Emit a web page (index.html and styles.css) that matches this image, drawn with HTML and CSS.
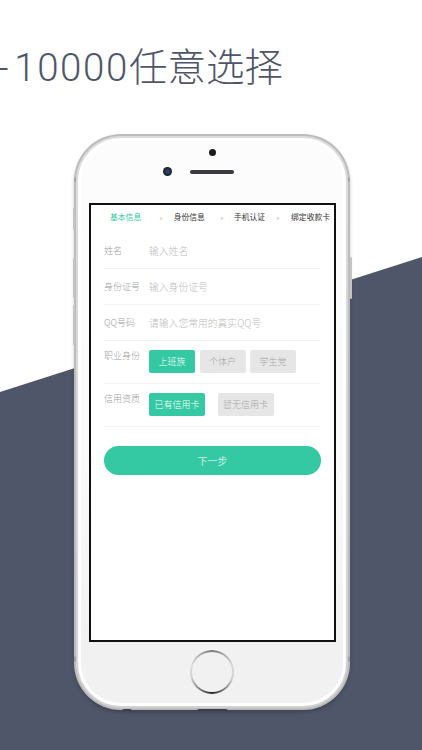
FILE: index.html
```html
<!DOCTYPE html>
<html lang="zh-CN">
<head>
<meta charset="utf-8">
<title>任意选择</title>
<link rel="stylesheet" href="styles.css">
</head>
<body>
<div class="page">
  <div class="slant"></div>
  <h1 class="headline"><span class="dash">-</span><span class="digits">10000</span>任意选择</h1>
  <div class="phone">
    <span class="side-btn side-mute"></span>
    <span class="side-btn side-up"></span>
    <span class="side-btn side-down"></span>
    <span class="side-btn side-power"></span>
    <div class="rim">
      <div class="bezel">
        <div class="top-bar">
          <span class="dot-sensor"></span>
          <div class="cam-row">
            <span class="camera"></span>
            <span class="speaker"></span>
          </div>
        </div>
        <div class="screen">
          <div class="steps">
            <span class="step step-on">基本信息</span>
            <span class="arrow arrow-a">»</span>
            <span class="step">身份信息</span>
            <span class="arrow arrow-b">»</span>
            <span class="step">手机认证</span>
            <span class="arrow arrow-c">»</span>
            <span class="step">绑定收款卡</span>
          </div>
          <div class="form">
            <div class="row">
              <span class="label">姓名</span><span class="hint">输入姓名</span>
            </div>
            <div class="row">
              <span class="label">身份证号</span><span class="hint">输入身份证号</span>
            </div>
            <div class="row">
              <span class="label">QQ号码</span><span class="hint">请输入您常用的真实QQ号</span>
            </div>
            <div class="row row-choice">
              <span class="label">职业身份</span>
              <div class="chips">
                <span class="chip chip-on">上班族</span>
                <span class="chip">个体户</span>
                <span class="chip">学生党</span>
              </div>
            </div>
            <div class="row row-choice">
              <span class="label">信用资质</span>
              <div class="chips chips-wide">
                <span class="chip chip-on">已有信用卡</span>
                <span class="chip">暂无信用卡</span>
              </div>
            </div>
            <div class="next">下一步</div>
          </div>
        </div>
        <div class="home-zone"><span class="home"></span></div>
      </div>
    </div>
    <span class="seam seam-a"></span>
    <span class="seam seam-b"></span>
  </div>
</div>
</body>
</html>
```
FILE: styles.css
```css
* { box-sizing: border-box; }
html, body { margin: 0; padding: 0; }
body {
  width: 422px;
  height: 750px;
  overflow: hidden;
  background: #fff;
  font-family: "Noto Sans CJK SC", "Noto Sans", sans-serif;
}
.page {
  position: relative;
  width: 422px;
  height: 750px;
  overflow: hidden;
  padding-top: 134px;
}
.slant {
  position: absolute;
  inset: 0;
  background: #50566a;
  clip-path: polygon(0 392px, 422px 257px, 422px 750px, 0 750px);
}
.headline {
  position: absolute;
  top: 38px;
  right: 139px;
  margin: 0;
  font-family: Roboto, "Noto Sans CJK SC", sans-serif;
  font-size: 38.5px;
  line-height: 60px;
  font-weight: 300;
  color: #50566a;
  white-space: nowrap;
}
.dash { letter-spacing: 5.6px; }
.digits { letter-spacing: 1.6px; }
.phone {
  position: relative;
  width: 276px;
  height: 576px;
  margin-left: 74px;
  border-radius: 47px;
  background: linear-gradient(#bcbcbc 0, #bcbcbc 43px, #a0a0a0 44px, #a0a0a0 47px, #bcbcbc 48px, #bcbcbc 522px, #a0a0a0 523px, #a0a0a0 527px, #bcbcbc 528px);
  padding: 2px;
  box-shadow: 0 3px 5px -2px rgba(30, 32, 45, .55);
}
.rim {
  height: 100%;
  border-radius: 45px;
  background: linear-gradient(#dcdcdc, #d2d2d2);
  padding: 2px;
}
.bezel {
  height: 100%;
  border-radius: 43px;
  background: linear-gradient(#fcfcfc 0, #fbfbfb 300px, #f1f1f1 510px);
  border: 3px solid #fff;
  padding: 0 8px;
  display: flex;
  flex-direction: column;
}
.top-bar {
  height: 62px;
  flex: none;
  display: flex;
  flex-direction: column;
  align-items: center;
}
.dot-sensor {
  width: 7px;
  height: 7px;
  margin-top: 8px;
  border-radius: 50%;
  background: #1c1c20;
}
.cam-row {
  margin-top: 11px;
  margin-left: -27px;
  display: flex;
  align-items: center;
  gap: 18px;
}
.camera {
  width: 9px;
  height: 9px;
  border-radius: 50%;
  background: radial-gradient(circle, #2c4068 20%, #15161c 75%);
}
.speaker {
  width: 44px;
  height: 4px;
  border-radius: 2px;
  background: #3a3a3e;
}
.screen {
  width: 247px;
  height: 439px;
  flex: none;
  background: #fff;
  border: 2px solid #111;
  display: flex;
  flex-direction: column;
}
.steps {
  height: 23px;
  flex: none;
  display: flex;
  align-items: center;
  padding: 0 0 0 19px;
  font-size: 7.8px;
  color: #333;
  white-space: nowrap;
}
.step-on { color: #34c9a3; }
.arrow {
  text-align: left;
  font-size: 7px;
  color: #b8b8b8;
}
.arrow-a { width: 32.5px; padding-left: 18px; }
.arrow-b { width: 29px; padding-left: 15px; }
.arrow-c { width: 26px; padding-left: 11px; }
.form {
  padding: 5px 13px 0;
  display: flex;
  flex-direction: column;
}
.row {
  height: 36px;
  border-bottom: 1px solid #f3f3f3;
  display: flex;
  align-items: center;
  font-size: 9px;
  font-weight: 300;
  color: #a0a0a0;
}
.label { width: 45px; flex: none; }
.hint { color: #bdbdbd; font-size: 9.8px; }
.row-choice {
  height: 43px;
  padding-top: 9px;
  align-items: flex-start;
}
.row-choice .label { margin-top: -1px; }
.chips {
  display: flex;
  gap: 4.5px;
}
.chips-wide { gap: 12.5px; }
.chip {
  height: 23px;
  width: 46px;
  border-radius: 2px;
  background: #e6e6e6;
  color: #a6a6a6;
  display: flex;
  align-items: center;
  justify-content: center;
  font-size: 9px;
  white-space: nowrap;
}
.chips-wide .chip { width: 56px; }
.chip-on { background: #34c9a3; color: #fff; }
.next {
  height: 29px;
  margin-top: 19px;
  border-radius: 15px;
  background: #34c9a3;
  color: #fff;
  font-size: 10px;
  font-weight: 300;
  display: flex;
  align-items: center;
  justify-content: center;
}
.home-zone {
  flex: 1;
  display: flex;
  align-items: flex-start;
  justify-content: center;
  padding-top: 8px;
}
.home {
  width: 44px;
  height: 44px;
  border-radius: 50%;
  background: conic-gradient(#7a7a7a 0deg, #d8d8d8 70deg, #cfcfcf 110deg, #2a2a2a 180deg, #d0d0d0 255deg, #e0e0e0 290deg, #7a7a7a 360deg);
  padding: 2px;
  display: block;
}
.home::after {
  content: "";
  display: block;
  width: 40px;
  height: 40px;
  border-radius: 50%;
  background: #f1f1f1;
}
.side-btn {
  position: absolute;
  width: 2px;
  background: #c4c4c4;
  border-radius: 1px;
}
.side-mute { left: -1.5px; top: 74px; height: 22px; }
.side-up { left: -1.5px; top: 124px; height: 40px; }
.side-down { left: -1.5px; top: 171px; height: 40px; }
.side-power { right: -2px; top: 123px; height: 42px; }
.seam {
  position: absolute;
  bottom: -1px;
  height: 2px;
  background: #3c3f4c;
  border-radius: 2px 2px 0 0;
}
.seam-a { left: 48px; width: 10px; }
.seam-b { left: 123px; width: 31px; }
```
